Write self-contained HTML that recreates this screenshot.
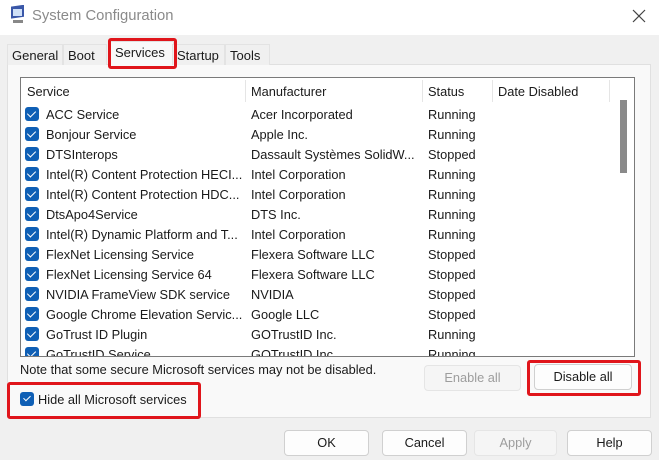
<!DOCTYPE html><html><head><style>
*{box-sizing:border-box;margin:0;padding:0}
body{width:659px;height:460px;overflow:hidden;background:#f0f0f0;font-family:"Liberation Sans",sans-serif;font-size:12.8px;color:#1a1a1a;position:relative}
.a{position:absolute}
.title{left:0;top:0;width:659px;height:35px;background:#fff}
.tab{top:44px;height:21px;border:1px solid #e3e3e3;border-bottom:none;background:#f0f0f0;padding:3px 0 0 4px;font-size:13px}
.panel{left:7px;top:64px;width:644px;height:354px;background:#f9f9f9;border:1px solid #e0e0e0}
.list{left:20px;top:77px;width:615px;height:280px;background:#fff;border:1px solid #7a7a7a;overflow:hidden}
.hdr{top:2px}
.div{top:2px;width:1px;height:22px;background:#e5e5e5}
.row{left:0;height:20px;width:600px}
.cb{position:absolute;left:4px;top:3px;width:14px;height:14px;background:#0f5fb5;border-radius:3px}
.cb:after{content:"";position:absolute;left:4px;top:2px;width:4px;height:7px;border:solid #fff;border-width:0 1.3px 1.3px 0;transform:rotate(45deg)}
.row span{position:absolute;top:3px;white-space:nowrap}
.btn{height:26px;border:1px solid #d0d0d0;border-radius:4px;background:#fdfdfd;text-align:center;line-height:24px}
.dis{color:#9d9d9d;background:#f5f5f5;border-color:#e5e5e5}
.red{border:3px solid #e0151b;border-radius:3px}
</style></head><body>
<div class="a title"></div>
<svg class="a" style="left:8px;top:5px" width="20" height="22" viewBox="0 0 20 22"><rect x="3" y="2" width="13" height="12" fill="#3a57a8" transform="skewY(-8)"/><rect x="5" y="4" width="9" height="7" fill="#cfe0f7"/><rect x="5" y="15" width="10" height="3" fill="#888"/></svg>
<div class="a" style="left:32px;top:8px;font-size:14.8px;color:#8a8a8a">System Configuration</div>
<svg class="a" style="left:632px;top:9px" width="14" height="14" viewBox="0 0 14 14"><path d="M1 1L13 13M13 1L1 13" stroke="#444" stroke-width="1.2"/></svg>
<div class="a panel"></div>
<div class="a tab" style="left:7px;width:56px">General</div>
<div class="a tab" style="left:63px;width:44px">Boot</div>
<div class="a tab" style="left:110px;width:64px;top:41px;height:24px;background:#f9f9f9;border-color:#e0e0e0">Services</div>
<div class="a tab" style="left:172px;width:53px">Startup</div>
<div class="a tab" style="left:225px;width:45px">Tools</div>
<div class="a red" style="left:108px;top:38px;width:69px;height:31px"></div>
<div class="a list">
<span class="a hdr" style="left:6px;top:6px">Service</span>
<span class="a hdr" style="left:230px;top:6px">Manufacturer</span>
<span class="a hdr" style="left:407px;top:6px">Status</span>
<span class="a hdr" style="left:477px;top:6px">Date Disabled</span>
<div class="a div" style="left:224px"></div><div class="a div" style="left:401px"></div><div class="a div" style="left:471px"></div><div class="a div" style="left:588px"></div>
<div class="a" style="left:599px;top:22px;width:7px;height:73px;background:#8a8a8a"></div>
<div class="a row" style="top:26px"><i class="cb"></i><span style="left:25px">ACC Service</span><span style="left:230px">Acer Incorporated</span><span style="left:407px">Running</span></div>
<div class="a row" style="top:46px"><i class="cb"></i><span style="left:25px">Bonjour Service</span><span style="left:230px">Apple Inc.</span><span style="left:407px">Running</span></div>
<div class="a row" style="top:66px"><i class="cb"></i><span style="left:25px">DTSInterops</span><span style="left:230px">Dassault Systèmes SolidW...</span><span style="left:407px">Stopped</span></div>
<div class="a row" style="top:86px"><i class="cb"></i><span style="left:25px">Intel(R) Content Protection HECI...</span><span style="left:230px">Intel Corporation</span><span style="left:407px">Running</span></div>
<div class="a row" style="top:106px"><i class="cb"></i><span style="left:25px">Intel(R) Content Protection HDC...</span><span style="left:230px">Intel Corporation</span><span style="left:407px">Running</span></div>
<div class="a row" style="top:126px"><i class="cb"></i><span style="left:25px">DtsApo4Service</span><span style="left:230px">DTS Inc.</span><span style="left:407px">Running</span></div>
<div class="a row" style="top:146px"><i class="cb"></i><span style="left:25px">Intel(R) Dynamic Platform and T...</span><span style="left:230px">Intel Corporation</span><span style="left:407px">Running</span></div>
<div class="a row" style="top:166px"><i class="cb"></i><span style="left:25px">FlexNet Licensing Service</span><span style="left:230px">Flexera Software LLC</span><span style="left:407px">Stopped</span></div>
<div class="a row" style="top:186px"><i class="cb"></i><span style="left:25px">FlexNet Licensing Service 64</span><span style="left:230px">Flexera Software LLC</span><span style="left:407px">Stopped</span></div>
<div class="a row" style="top:206px"><i class="cb"></i><span style="left:25px">NVIDIA FrameView SDK service</span><span style="left:230px">NVIDIA</span><span style="left:407px">Stopped</span></div>
<div class="a row" style="top:226px"><i class="cb"></i><span style="left:25px">Google Chrome Elevation Servic...</span><span style="left:230px">Google LLC</span><span style="left:407px">Stopped</span></div>
<div class="a row" style="top:246px"><i class="cb"></i><span style="left:25px">GoTrust ID Plugin</span><span style="left:230px">GOTrustID Inc.</span><span style="left:407px">Running</span></div>
<div class="a row" style="top:266px"><i class="cb"></i><span style="left:25px">GoTrustID Service</span><span style="left:230px">GOTrustID Inc.</span><span style="left:407px">Running</span></div>
</div>
<div class="a" style="left:20px;top:362px">Note that some secure Microsoft services may not be disabled.</div>
<div class="a btn dis" style="left:424px;top:365px;width:97px">Enable all</div>
<div class="a btn" style="left:534px;top:364px;width:98px">Disable all</div>
<div class="a red" style="left:527px;top:360px;width:114px;height:36px"></div>
<div class="a" style="left:20px;top:392px;width:14px;height:14px;background:#0f5fb5;border-radius:3px"></div>
<div class="a" style="left:25px;top:394px;width:4px;height:7px;border:solid #fff;border-width:0 1.3px 1.3px 0;transform:rotate(45deg)"></div>
<div class="a" style="left:38px;top:392px;font-size:12.8px">Hide all Microsoft services</div>
<div class="a red" style="left:7px;top:382px;width:194px;height:37px"></div>
<div class="a btn" style="left:284px;top:430px;width:85px">OK</div>
<div class="a btn" style="left:382px;top:430px;width:85px">Cancel</div>
<div class="a btn dis" style="left:474px;top:430px;width:83px">Apply</div>
<div class="a btn" style="left:567px;top:430px;width:85px">Help</div>
</body></html>
